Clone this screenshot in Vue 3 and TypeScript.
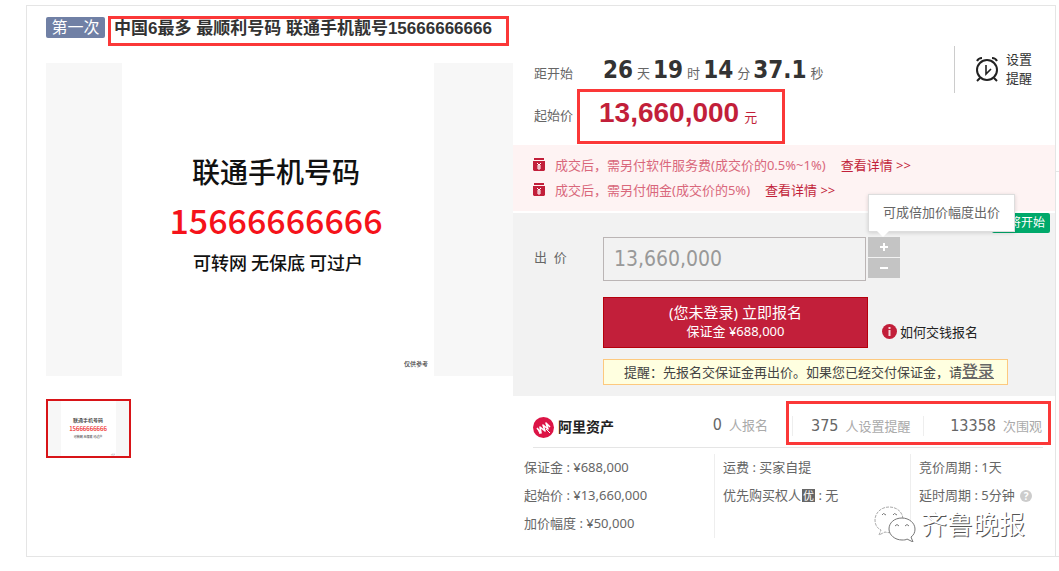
<script setup lang="ts">
import { ref } from 'vue'

interface TimePart { value: string; unit: string }
interface Fee { text: string }
interface Stat { value: string; label: string }

const countdown: TimePart[] = [
  { value: '26', unit: '天' },
  { value: '19', unit: '时' },
  { value: '14', unit: '分' },
  { value: '37.1', unit: '秒' },
]
const fees: Fee[] = [
  { text: '成交后，需另付软件服务费(成交价的0.5%~1%)' },
  { text: '成交后，需另付佣金(成交价的5%)' },
]
const watched: Stat[] = [
  { value: '375', label: '人设置提醒' },
  { value: '13358', label: '次围观' },
]
const step = 50000
const bid = ref('13,660,000')
const changeBid = (direction: number) => {
  const next = Number(bid.value.replace(/,/g, '')) + direction * step
  bid.value = next.toLocaleString('en-US')
}
</script>

<template>
  <div class="page">
    <main class="card">
      <header class="head">
        <span class="round">第一次</span>
        <h1 class="title">中国6最多 最顺利号码 联通手机靓号15666666666</h1>
      </header>

      <div class="columns">
        <section class="gallery">
          <div class="photo">
            <div class="sheet">
              <p class="sheet-name">联通手机号码</p>
              <p class="sheet-number">15666666666</p>
              <p class="sheet-note">可转网 无保底 可过户</p>
              <p class="sheet-foot">仅供参考</p>
            </div>
          </div>
          <button class="thumb" type="button" aria-label="联通手机号码">
            <svg viewBox="0 0 81 55" width="81" height="55">
              <rect width="81" height="55" fill="#f7f7f7" />
              <rect x="13" width="55" height="55" fill="#fff" />
              <text x="40" y="21" class="t-name">联通手机号码</text>
              <text x="40" y="30" class="t-number">15666666666</text>
              <text x="40" y="37" class="t-note">可转网 无保底 可过户</text>
              <text x="67" y="54" class="t-foot">仅供参考</text>
            </svg>
          </button>
        </section>

        <section class="detail">
          <div class="top">
            <div class="top-main">
              <div class="timer">
                <span class="label">距开始</span>
                <span class="clock">
                  <template v-for="part in countdown" :key="part.unit">
                    <b>{{ part.value }}</b><i>{{ part.unit }}</i>
                  </template>
                </span>
              </div>
              <div class="price-row">
                <span class="label">起始价</span>
                <div class="price"><b>13,660,000</b><span>元</span></div>
              </div>
            </div>
            <button class="remind" type="button">
              <svg viewBox="0 0 26 26" width="26" height="26" fill="none" stroke="#222" stroke-width="2">
                <circle cx="13" cy="14" r="10" />
                <path d="M12 9v9l5-5" stroke-width="1.6" />
                <path d="M3 5c1-2 3-3 5-3M23 5c-1-2-3-3-5-3M6 22l-3 3M20 22l3 3" />
              </svg>
              <span>设置<br />提醒</span>
            </button>
          </div>

          <ul class="fees">
            <li v-for="fee in fees" :key="fee.text">
              <svg viewBox="0 0 12 13" width="12" height="13">
                <path d="M1 0h10v2H1zM0 3h12v9l-1 1H1l-1-1z" fill="#c21f3a" />
                <path d="M4 5l2 2 2-2M4 8h4M4 10h4M6 7v5" fill="none" stroke="#fff" />
              </svg>
              <span>{{ fee.text }}</span>
              <a href="#">查看详情 &gt;&gt;</a>
            </li>
          </ul>

          <form class="bid" @submit.prevent>
            <span class="soon">即将开始</span>
            <label class="bid-label" for="bid">出&nbsp; 价</label>
            <div class="bid-main">
              <div class="bid-field">
                <input id="bid" v-model="bid" type="text" />
                <div class="steps">
                  <button type="button" aria-label="加价" @click="changeBid(1)">
                    <svg viewBox="0 0 8 8" width="8" height="8"><path d="M4 0v8M0 4h8" stroke="#fff" stroke-width="2" /></svg>
                  </button>
                  <button type="button" aria-label="减价" @click="changeBid(-1)">
                    <svg viewBox="0 0 8 8" width="8" height="8"><path d="M0 4h8" stroke="#fff" stroke-width="2" /></svg>
                  </button>
                  <span class="tip">可成倍加价幅度出价</span>
                </div>
              </div>
              <div class="apply-row">
                <button class="apply" type="submit">
                  <span>(您未登录) 立即报名</span>
                  <small>保证金 ¥688,000</small>
                </button>
                <a class="how" href="#">
                  <svg viewBox="0 0 15 15" width="15" height="15">
                    <circle cx="7.5" cy="7.5" r="7.5" fill="#c21f3a" />
                    <path d="M7.5 3v2M7.5 6v6" stroke="#f3d5da" stroke-width="2" />
                  </svg>
                  <span>如何交钱报名</span>
                </a>
              </div>
              <p class="notice">提醒：先报名交保证金再出价。如果您已经交付保证金，请<a href="#">登录</a></p>
            </div>
          </form>

          <div class="stats">
            <div class="brand">
              <svg viewBox="0 0 21 21" width="21" height="21">
                <circle cx="10.5" cy="10.5" r="10.5" fill="#dc1446" />
                <path d="M4 11l4 5-1-6 5 4-2-6 5 4-2-6 4 4" fill="none" stroke="#fff" stroke-width="1.6" stroke-linejoin="round" />
                <path d="M13 12l4 4M5 12l2 5" fill="none" stroke="#fff" />
              </svg>
              <strong>阿里资产</strong>
            </div>
            <span class="stat joined"><b>0</b>人报名</span>
            <div class="watched">
              <span v-for="stat in watched" :key="stat.label" class="stat"><b>{{ stat.value }}</b>{{ stat.label }}</span>
            </div>
          </div>

          <div class="facts">
            <ul>
              <li>保证金 : ¥688,000</li>
              <li>起始价 : ¥13,660,000</li>
              <li>加价幅度 : ¥50,000</li>
            </ul>
            <ul>
              <li>运费 : 买家自提</li>
              <li>优先购买权人<span class="prior">优</span> : 无</li>
            </ul>
            <ul>
              <li>竞价周期 : 1天</li>
              <li>延时周期 : 5分钟 <span class="help">?</span></li>
            </ul>
          </div>
        </section>
      </div>

      <div class="source">
        <svg viewBox="0 0 42 36" width="42" height="36" fill="#fff" stroke="#777">
          <path d="M15 1C7 1 1 7 1 14c0 5 2 8 6 10l-2 5 6-3c11 3 18-4 18-12S23 1 15 1z" stroke="#aaa" stroke-dasharray="3 1" />
          <path d="M8 9q1-3 4 0M19 9q1-3 4 0" />
          <path d="M28 12c-8 0-13 5-13 11s6 11 13 11c2 0 4 0 5-1l6 3-2-5c3-2 4-5 4-8 0-6-6-11-13-11z" />
          <path d="M21 20q2-3 4 0M31 20q2-3 4 0" />
        </svg>
        <span>齐鲁晚报</span>
      </div>
    </main>
    <div class="edge"><i></i><i></i></div>
  </div>
</template>

<style>
body {
  margin: 0;
  background: #fff;
}
</style>

<style scoped>
.page {
  display: grid;
  grid-template-columns: minmax(0, 1fr) 3px;
  padding: 5px 0 14px 26px;
  font: 13px/20px "Noto Sans", "Noto Sans CJK SC", sans-serif;
  color: #666;
}
p, ul, h1 { margin: 0; padding: 0; }
ul { list-style: none; }
button, input { font: inherit; margin: 0; padding: 0; border-radius: 0; }
button { cursor: pointer; }
svg { display: block; flex: none; }
i { font-style: normal; }

.card {
  position: relative;
  border: 1px solid #e5e5e5;
}
.edge { display: grid; grid-template-rows: 167px 1fr; }
.edge i { border-bottom: 1px solid #e5e5e5; }

.head {
  display: flex;
  align-items: flex-start;
  gap: 3px;
  padding: 10px 0 0 19px;
}
.round {
  width: 59px;
  margin-top: 1px;
  border-radius: 2px;
  background: #7080a5;
  color: #fff;
  font-size: 16px;
  line-height: 21px;
  text-align: center;
}
.title {
  box-sizing: border-box;
  width: 401px;
  height: 30px;
  padding-left: 3px;
  border: 3px solid #fb3838;
  color: #333;
  font: bold 17px/20px "Liberation Sans", "Noto Sans CJK SC", sans-serif;
  white-space: nowrap;
}

.columns {
  display: grid;
  grid-template-columns: 486px minmax(0, 1fr);
}
.gallery { padding: 17px 0 0 19px; }
.photo {
  padding: 0 79px 0 76px;
  background: #f7f7f7;
}
.sheet {
  box-sizing: border-box;
  height: 313px;
  padding-top: 87px;
  background: #fff;
  color: #111;
  font-family: "Noto Sans CJK SC", sans-serif;
  font-weight: 500;
  text-align: center;
}
.sheet-name { padding-right: 4px; font-size: 28px; line-height: 42px; }
.sheet-number {
  padding-right: 4px;
  color: #f5121a;
  font-family: "Noto Sans CJK SC", sans-serif;
  font-size: 34px;
  line-height: 56px;
}
.sheet-note { font-size: 18px; line-height: 28px; }
.sheet-foot {
  padding: 80px 6px 0 0;
  color: #444;
  font-size: 6px;
  line-height: 16px;
  text-align: right;
}
.thumb {
  display: block;
  margin-top: 23px;
  border: 2px solid #d81418;
  background: #f7f7f7;
}
.thumb text { font-family: "Noto Sans CJK SC", sans-serif; font-weight: 500; text-anchor: middle; }
.thumb .t-name { font-size: 5px; fill: #333; }
.thumb .t-number { font-size: 6px; fill: #e22; }
.thumb .t-note { font-size: 3px; fill: #444; }
.thumb .t-foot { font-size: 1px; fill: #777; text-anchor: end; }

.top {
  display: flex;
  justify-content: space-between;
  align-items: flex-start;
  height: 99px;
}
.label { width: 43px; padding-left: 21px; }
.timer {
  display: flex;
  align-items: baseline;
  height: 43px;
}
.clock {
  display: flex;
  align-items: baseline;
  padding-left: 26px;
  line-height: 48px;
}
.clock b { color: #333; font-family: "DejaVu Sans Condensed", sans-serif; font-size: 24px; }
.clock i { margin: 0 3px 0 4px; }
.price-row { display: flex; }
.price-row .label { line-height: 52px; }
.price {
  display: flex;
  align-items: baseline;
  gap: 5px;
  box-sizing: border-box;
  width: 208px;
  height: 55px;
  padding-left: 19px;
  border: 3px solid #fb3838;
  color: #c21f3a;
}
.price b { font: bold 28px/42px "Liberation Sans", sans-serif; }
.remind {
  display: flex;
  align-items: center;
  gap: 6px;
  width: 101px;
  height: 47px;
  padding: 0 0 2px 19px;
  border: 0;
  border-left: 1px solid #ccc;
  background: none;
  color: #333;
  line-height: 19px;
}

.fees {
  padding: 7px 20px 9px;
  background: #fef3f3;
  color: #d9677b;
}
.fees li {
  display: flex;
  align-items: center;
  gap: 10px;
  height: 25px;
}
.fees a {
  margin-left: 5px;
  color: #c21f3a;
  text-decoration: none;
}

.bid {
  position: relative;
  display: flex;
  margin-top: 2px;
  padding: 24px 0 11px 21px;
  background: #f2f2f2;
}
.soon {
  position: absolute;
  top: 0;
  right: 5px;
  padding: 0 5px;
  border-radius: 2px;
  background: #00a96b;
  color: #fff;
  font-size: 12px;
}
.bid-label { width: 69px; line-height: 40px; }
.bid-field { display: flex; gap: 2px; }
.bid-field input {
  box-sizing: border-box;
  width: 263px;
  height: 44px;
  padding-left: 10px;
  border: 1px solid #bbb5b5;
  background: #f2f2f2;
  color: #999;
  font-family: "DejaVu Sans Condensed", sans-serif;
  font-size: 21px;
}
.steps {
  position: relative;
  display: flex;
  flex-direction: column;
  gap: 1px;
}
.steps button {
  display: grid;
  place-items: center;
  width: 32px;
  height: 20px;
  border: 0;
  background: #c4c4c4;
}
.tip {
  position: absolute;
  left: 0;
  bottom: 49px;
  padding: 7px 14px 9px;
  border: 1px solid #ddd;
  background: #fff;
  box-shadow: 0 1px 4px rgba(0, 0, 0, 0.15);
  white-space: nowrap;
}
.tip::after {
  position: absolute;
  top: 100%;
  left: 8px;
  border: 6px solid transparent;
  border-top-color: #fff;
  border-bottom: 0;
  content: "";
}
.apply-row { display: flex; gap: 14px; margin-top: 16px; }
.apply {
  box-sizing: border-box;
  width: 265px;
  height: 51px;
  padding-bottom: 4px;
  border: 1px solid #b5000c;
  background: #c21f3a;
  color: #fff;
}
.apply span, .apply small { display: block; }
.apply span { font-size: 15px; line-height: 20px; }
.apply small { font-size: 13px; line-height: 18px; }
.how {
  display: flex;
  align-items: center;
  gap: 3px;
  padding-top: 18px;
  color: #222;
  text-decoration: none;
}
.notice {
  box-sizing: border-box;
  width: 405px;
  height: 26px;
  margin-top: 11px;
  padding-left: 20px;
  border: 1px solid #fdc97f;
  background: #ffffe0;
  color: #444;
  line-height: 23px;
  white-space: nowrap;
}
.notice a { color: #666; font-size: 16px; font-weight: 500; }

.stats {
  display: flex;
  align-items: center;
  height: 44px;
  margin: 0 4px 0 20px;
  padding: 5px 0 2px;
}
.brand {
  display: flex;
  align-items: center;
  gap: 4px;
  padding-top: 8px;
}
.brand strong { color: #222; font-size: 14px; }
.stat {
  display: flex;
  align-items: baseline;
  gap: 7px;
  color: #aaa;
}
.stat b {
  color: #666;
  font-family: "DejaVu Sans Condensed", sans-serif;
  font-size: 16px;
  font-weight: normal;
}
.joined { margin: 4px 18px 0 auto; }
.watched {
  display: flex;
  align-items: center;
  justify-content: space-between;
  box-sizing: border-box;
  width: 265px;
  height: 44px;
  padding: 5px 6px 0 3px;
  border: 3px solid #fb3838;
}
.watched .stat { padding-left: 18px; border-left: 1px solid #eee; }
.watched .stat + .stat { padding-left: 26px; }

.facts {
  display: grid;
  grid-template-columns: 181px 196px 1fr;
  margin: 0 12px 0 20px;
  padding: 6px 0 18px;
  border-top: 1px solid #e5e5e5;
}
.facts ul { padding-left: 8px; white-space: nowrap; }
.facts ul:first-child { margin-left: -9px; padding-left: 0; }
.facts ul + ul { border-left: 1px solid #eee; }
.facts li { height: 28px; line-height: 26px; }
.prior {
  display: inline-block;
  width: 13px;
  margin-left: 1px;
  background: #666;
  color: #fff;
  font-size: 11px;
  line-height: 13px;
  text-align: center;
}
.help {
  display: inline-block;
  width: 12px;
  margin-left: 2px;
  border-radius: 50%;
  background: #ccc;
  color: #fff;
  font-size: 10px;
  font-weight: bold;
  line-height: 12px;
  text-align: center;
}
.source {
  position: absolute;
  right: 30px;
  bottom: 13px;
  display: flex;
  align-items: center;
  gap: 5px;
  color: #fff;
  font-size: 26px;
  line-height: 38px;
  text-shadow: 1px 1px 0 #555;
}
</style>
